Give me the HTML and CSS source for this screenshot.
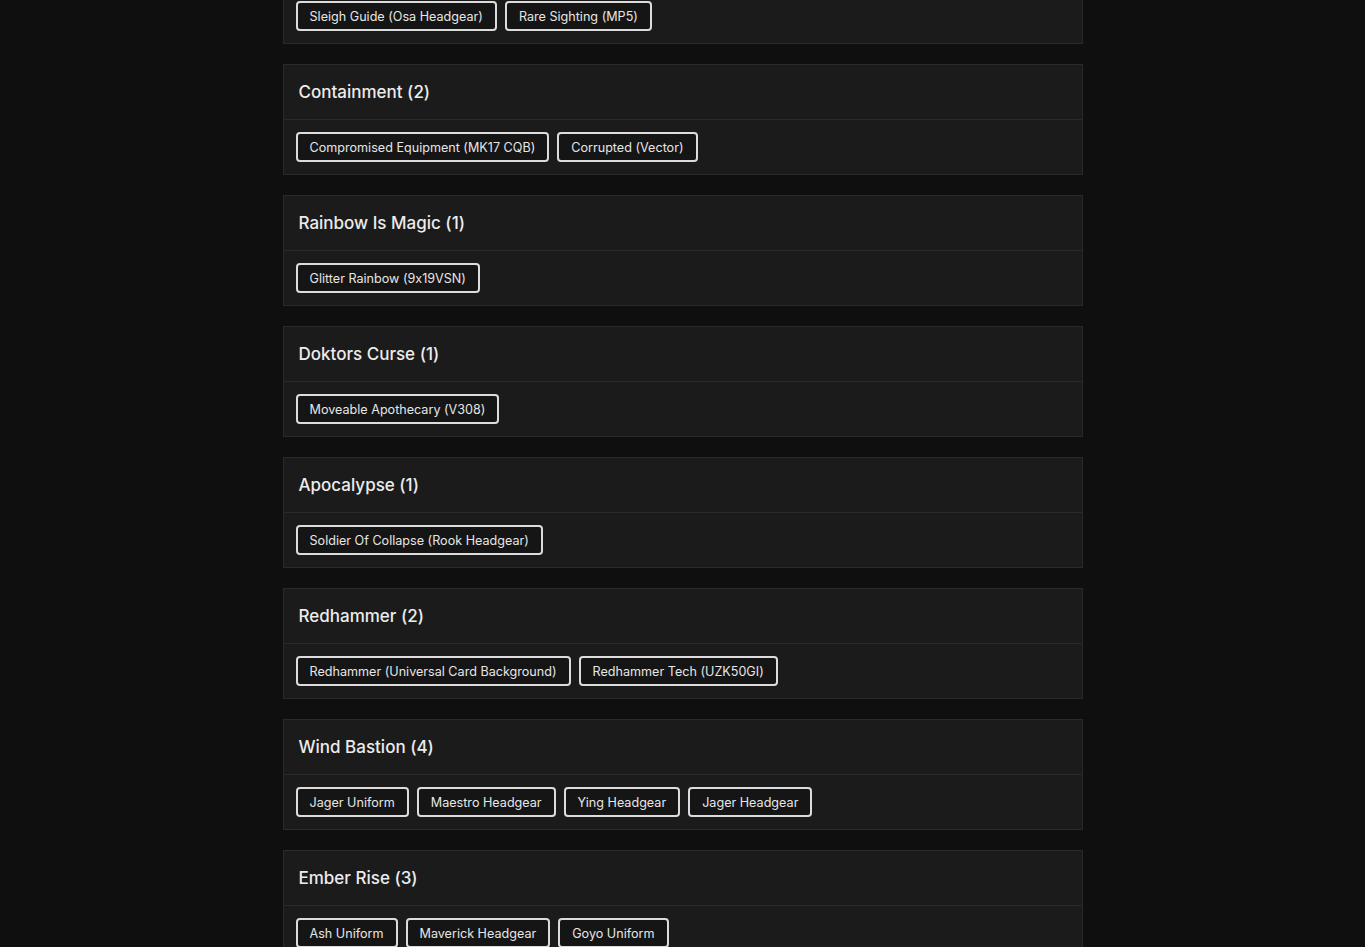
FILE: index.html
```html
<!DOCTYPE html>
<html lang="en">
<head>
<meta charset="utf-8">
<title>Collections</title>
<link rel="stylesheet" href="styles.css">
</head>
<body>
<main class="list">
  <section class="card card--cut">
    <div class="card-body">
      <span class="chip">Sleigh Guide (Osa Headgear)</span>
      <span class="chip">Rare Sighting (MP5)</span>
    </div>
  </section>
  <section class="card">
    <h2 class="card-head">Containment (2)</h2>
    <div class="card-body">
      <span class="chip">Compromised Equipment (MK17 CQB)</span>
      <span class="chip">Corrupted (Vector)</span>
    </div>
  </section>
  <section class="card">
    <h2 class="card-head">Rainbow Is Magic (1)</h2>
    <div class="card-body">
      <span class="chip">Glitter Rainbow (9x19VSN)</span>
    </div>
  </section>
  <section class="card">
    <h2 class="card-head">Doktors Curse (1)</h2>
    <div class="card-body">
      <span class="chip">Moveable Apothecary (V308)</span>
    </div>
  </section>
  <section class="card">
    <h2 class="card-head">Apocalypse (1)</h2>
    <div class="card-body">
      <span class="chip">Soldier Of Collapse (Rook Headgear)</span>
    </div>
  </section>
  <section class="card">
    <h2 class="card-head">Redhammer (2)</h2>
    <div class="card-body">
      <span class="chip">Redhammer (Universal Card Background)</span>
      <span class="chip">Redhammer Tech (UZK50GI)</span>
    </div>
  </section>
  <section class="card">
    <h2 class="card-head">Wind Bastion (4)</h2>
    <div class="card-body">
      <span class="chip">Jager Uniform</span>
      <span class="chip">Maestro Headgear</span>
      <span class="chip">Ying Headgear</span>
      <span class="chip">Jager Headgear</span>
    </div>
  </section>
  <section class="card">
    <h2 class="card-head">Ember Rise (3)</h2>
    <div class="card-body">
      <span class="chip">Ash Uniform</span>
      <span class="chip">Maverick Headgear</span>
      <span class="chip">Goyo Uniform</span>
    </div>
  </section>
</main>
</body>
</html>
```
FILE: styles.css
```css
html, body {
  margin: 0;
  padding: 0;
  background: #0f0f0f;
  height: 947px;
  overflow: hidden;
}
body {
  font-family: Inter, "Noto Sans", sans-serif;
  font-feature-settings: "calt" 0;
  color: #e8e8e8;
}
.list {
  width: 800px;
  margin: 0 auto;
  display: flex;
  flex-direction: column;
  gap: 20px;
}
.card {
  background: #1b1b1b;
  border: 1px solid #2a2a2a;
}
.card--cut {
  margin-top: -12px;
}
.card-head {
  margin: 0;
  height: 54px;
  display: flex;
  align-items: center;
  padding: 0 15px;
  font-size: 17px;
  font-weight: 500;
  color: #ececec;
  border-bottom: 1px solid #2a2a2a;
}
.card-body {
  height: 54px;
  box-sizing: border-box;
  padding: 12px 12px 0;
  display: flex;
  gap: 8px;
  align-items: flex-start;
}
.chip {
  display: inline-flex;
  align-items: center;
  height: 30px;
  box-sizing: border-box;
  padding: 0 12px;
  border: 2px solid #dcdcdc;
  border-radius: 4px;
  background: #151515;
  font-size: 12.6px;
  color: #e6e6e6;
  white-space: nowrap;
}
```
